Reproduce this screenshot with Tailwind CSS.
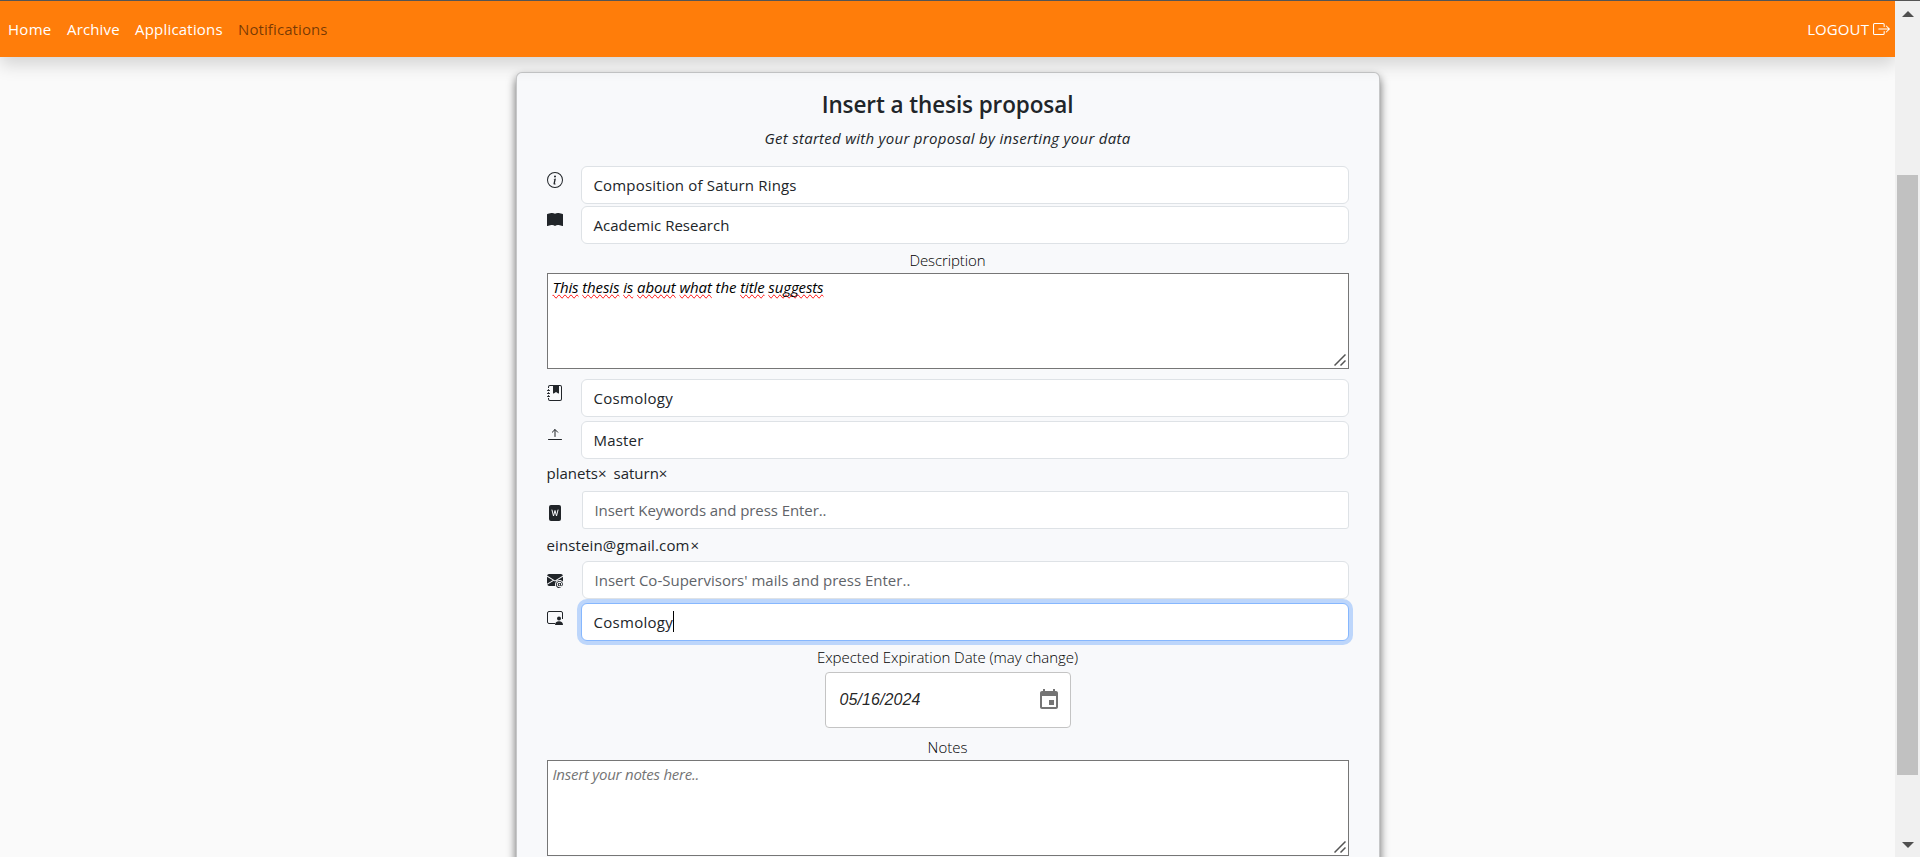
<!DOCTYPE html>
<html lang="en">
<head>
<meta charset="utf-8">
<title>Insert a thesis proposal</title>
<script src="https://cdn.jsdelivr.net/npm/@tailwindcss/browser@4"></script>
</head>
<body class="flex h-[857px] overflow-hidden border-t border-[#555] bg-[#fafafa] font-['Open_Sans',sans-serif] text-[15px] leading-6 text-[#212529]">
<div class="flex h-[856px] w-[1895px] flex-col overflow-hidden">
  <nav class="relative z-10 flex h-14 shrink-0 items-center justify-between bg-[#ff7d0a] pr-[5px] pb-px pl-2 text-white shadow-[0_8px_16px_rgba(0,0,0,0.15)]">
    <div class="flex gap-4">
      <span class="w-[43px] font-medium tracking-[0.3px] whitespace-nowrap">Home</span>
      <span class="w-[52px] font-medium tracking-[0.15px] whitespace-nowrap">Archive</span>
      <span class="w-[87px] font-medium tracking-[0.2px] whitespace-nowrap">Applications</span>
      <span class="tracking-[0.1px] whitespace-nowrap text-black/55">Notifications</span>
    </div>
    <div class="flex items-center gap-1">
      <span class="tracking-[0.1px]">LOGOUT</span>
      <svg class="h-4 w-[17px]" viewBox="0 0 16 16" preserveAspectRatio="none" fill="currentColor"><path d="M10 12.5a.5.5 0 0 1-.5.5h-8a.5.5 0 0 1-.5-.5v-9a.5.5 0 0 1 .5-.5h8a.5.5 0 0 1 .5.5v2a.5.5 0 0 0 1 0v-2A1.5 1.5 0 0 0 9.5 2h-8A1.5 1.5 0 0 0 0 3.5v9A1.5 1.5 0 0 0 1.5 14h8a1.5 1.5 0 0 0 1.5-1.5v-2a.5.5 0 0 0-1 0z"/><path d="M15.854 8.354a.5.5 0 0 0 0-.708l-3-3a.5.5 0 0 0-.708.708L14.293 7.5H5.5a.5.5 0 0 0 0 1h8.793l-2.147 2.146a.5.5 0 0 0 .708.708z"/></svg>
    </div>
  </nav>

  <main class="mx-auto mt-[15px] flex h-[900px] w-[864px] shrink-0 flex-col rounded-md border border-black/20 bg-[#f8f9fb] px-[30px] pt-[17px] shadow-[0_5px_10px_rgba(0,0,0,0.6)]">
    <h1 class="text-center text-[22.5px] leading-[29px] font-semibold tracking-[-0.1px]">Insert a thesis proposal</h1>
    <p class="mt-[7px] text-center tracking-[0.28px] italic">Get started with your proposal by inserting your data</p>

    <div class="mt-4 flex justify-between">
      <svg class="mt-1.5 size-4" viewBox="0 0 16 16" fill="currentColor"><path d="M8 15A7 7 0 1 1 8 1a7 7 0 0 1 0 14m0 1A8 8 0 1 0 8 0a8 8 0 0 0 0 16"/><path d="m8.93 6.588-2.29.287-.082.38.45.083c.294.07.352.176.288.469l-.738 3.468c-.194.897.105 1.319.808 1.319.545 0 1.178-.252 1.465-.598l.088-.416c-.2.176-.492.246-.686.246-.275 0-.375-.193-.304-.533zM9 4.5a1 1 0 1 1-2 0 1 1 0 0 1 2 0"/></svg>
      <div class="h-[38px] w-[768px] rounded-md border border-[#dee2e6] bg-white px-3 py-1.5 tracking-[0.17px]">Composition of Saturn Rings</div>
    </div>
    <div class="mt-0.5 flex justify-between">
      <svg class="mt-1.5 size-4" viewBox="0 0 16 16" fill="currentColor"><path d="M8 1.783C7.015.936 5.587.81 4.287.94c-1.514.153-3.042.672-3.994 1.105A.5.5 0 0 0 0 2.5v11a.5.5 0 0 0 .707.455c.882-.4 2.303-.881 3.68-1.02 1.409-.142 2.59.087 3.223.877a.5.5 0 0 0 .78 0c.633-.79 1.814-1.019 3.222-.877 1.378.139 2.8.62 3.681 1.02A.5.5 0 0 0 16 13.5v-11a.5.5 0 0 0-.293-.455c-.952-.433-2.48-.952-3.994-1.105C10.413.809 8.985.936 8 1.783"/></svg>
      <div class="h-[38px] w-[768px] rounded-md border border-[#dee2e6] bg-white px-3 py-1.5 tracking-[0.03px]">Academic Research</div>
    </div>

    <p class="mt-1 text-center font-light tracking-[-0.1px] text-black">Description</p>
    <div class="relative mt-px h-24 border border-[#767676] bg-white px-[5px] pt-px tracking-[-0.11px] text-black italic">
      <span class="[text-decoration-line:spelling-error]">This</span> <span class="[text-decoration-line:spelling-error]">thesis</span> <span class="[text-decoration-line:spelling-error]">is</span> <span class="[text-decoration-line:spelling-error]">about</span> <span class="[text-decoration-line:spelling-error]">what</span> the <span class="[text-decoration-line:spelling-error]">title</span> <span class="[text-decoration-line:spelling-error]">suggests</span>
      <svg class="absolute right-0.5 bottom-0.5 size-3" viewBox="0 0 12 12" fill="none" stroke="#555" stroke-width="1.5"><path d="M.5 11.5l11-11M6.5 11.5l5-5"/></svg>
    </div>

    <div class="mt-2.5 flex justify-between">
      <svg class="mt-1.5 size-4" viewBox="0 0 16 16" fill="currentColor"><path d="M6 1h6v7a.5.5 0 0 1-.757.429L9 7.083 6.757 8.43A.5.5 0 0 1 6 8z"/><path d="M3 0h10a2 2 0 0 1 2 2v12a2 2 0 0 1-2 2H3a2 2 0 0 1-2-2v-1h1v1a1 1 0 0 0 1 1h10a1 1 0 0 0 1-1V2a1 1 0 0 0-1-1H3a1 1 0 0 0-1 1v1H1V2a2 2 0 0 1 2-2"/><path d="M1 5v-.5a.5.5 0 0 1 1 0V5h.5a.5.5 0 0 1 0 1h-2a.5.5 0 0 1 0-1zm0 3v-.5a.5.5 0 0 1 1 0V8h.5a.5.5 0 0 1 0 1h-2a.5.5 0 0 1 0-1zm0 3v-.5a.5.5 0 0 1 1 0v.5h.5a.5.5 0 0 1 0 1h-2a.5.5 0 0 1 0-1z"/></svg>
      <div class="h-[38px] w-[768px] rounded-md border border-[#dee2e6] bg-white px-3 py-1.5 tracking-[0.28px]">Cosmology</div>
    </div>
    <div class="mt-1 flex justify-between">
      <svg class="mt-1.5 size-4" viewBox="0 0 16 16" fill="none" stroke="currentColor" stroke-linecap="round" stroke-linejoin="round"><path d="M1.5 12.5h13M8 9.5V2.7M5.3 5.2 8 2.5l2.7 2.7"/></svg>
      <div class="h-[38px] w-[768px] rounded-md border border-[#dee2e6] bg-white px-3 py-1.5 tracking-[0.18px]">Master</div>
    </div>

    <div class="mt-0.5 flex gap-[7px]"><span>planets×</span><span>saturn×</span></div>
    <div class="mt-1.5 flex justify-between">
      <svg class="mt-3.5 size-4" viewBox="0 0 16 16"><rect x="2" width="12" height="16" rx="2" fill="currentColor"/><path d="M5 5l1.5 6L8 5.5l1.5 5.500L11 5" fill="none" stroke="#f8f9fb" stroke-linecap="round" stroke-linejoin="round"/></svg>
      <div class="h-[38px] w-[767px] rounded-[3px] border border-[#dee2e6] bg-white px-3 py-1.5 tracking-[-0.07px] text-[#5f6469]">Insert Keywords and press Enter..</div>
    </div>

    <div class="mt-1 flex gap-px"><span class="tracking-[0.13px]">einstein@gmail.com</span><span>×</span></div>
    <div class="mt-1 flex justify-between">
      <svg class="mt-[11px] size-4" viewBox="0 0 16 16" fill="currentColor"><path d="M2 2A2 2 0 0 0 .05 3.555L8 8.414l7.95-4.859A2 2 0 0 0 14 2zm-2 9.8V4.698l5.803 3.546zm6.761-2.97-6.57 4.026A2 2 0 0 0 2 14h6.256A4.5 4.5 0 0 1 8 12.5a4.49 4.49 0 0 1 1.606-3.446l-.367-.225L8 9.586zM16 9.671V4.697l-5.803 3.546.338.208A4.5 4.5 0 0 1 12.5 8c1.414 0 2.675.652 3.5 1.671"/><path d="M15.834 12.244c0 1.168-.577 2.025-1.587 2.025-.503 0-1.002-.228-1.12-.648h-.043c-.118.416-.543.643-1.015.643-.77 0-1.259-.542-1.259-1.434v-.529c0-.844.481-1.4 1.26-1.4.585 0 .87.333.953.63h.03v-.568h.905v2.19c0 .272.18.42.411.42.315 0 .639-.415.639-1.39v-.118c0-1.277-.95-2.326-2.484-2.326h-.04c-1.582 0-2.64 1.067-2.64 2.724v.157c0 1.867 1.237 2.654 2.57 2.654h.045c.507 0 .935-.07 1.18-.18v.731c-.219.1-.643.175-1.237.175h-.044C10.438 16 9 14.82 9 12.646v-.214C9 10.36 10.421 9 12.485 9h.035c2.12 0 3.314 1.43 3.314 3.034zm-4.04.21v.227c0 .586.227.8.581.8.31 0 .564-.17.564-.743v-.367c0-.516-.275-.708-.572-.708-.346 0-.573.245-.573.791"/></svg>
      <div class="h-[38px] w-[767px] rounded-md border border-[#dee2e6] bg-white px-3 py-1.5 tracking-[0.01px] text-[#5f6469]">Insert Co-Supervisors' mails and press Enter..</div>
    </div>
    <div class="mt-1 flex justify-between">
      <svg class="mt-[7px] size-4" viewBox="0 0 16 16"><path d="M8 13.5H2A1.5 1.5 0 0 1 .5 12V3A1.5 1.5 0 0 1 2 1.500h12A1.5 1.5 0 0 1 15.5 3v6" fill="none" stroke="currentColor"/><circle cx="12" cy="8.5" r="2" fill="currentColor"/><path d="M8 15c0-2.500 1.500-3.800 4-3.800s4 1.300 4 3.800z" fill="currentColor"/></svg>
      <div class="flex h-[38px] w-[768px] rounded-md border border-[#86b7fe] bg-white px-3 py-1.5 shadow-[0_0_0_4px_rgba(13,110,253,0.25)]"><span class="tracking-[0.28px]">Cosmology</span><span class="mt-px h-[21px] w-px bg-black"></span></div>
    </div>

    <p class="mt-1 text-center font-light tracking-[-0.04px] text-black">Expected Expiration Date (may change)</p>
    <div class="mx-auto mt-[3px] flex h-14 w-[246px] items-center justify-between rounded border border-[#c4c4c4] bg-white pr-[9px] pl-3.5">
      <span class="font-['Liberation_Sans',sans-serif] text-base tracking-[0.1px] text-black/87 italic">05/16/2024</span>
      <svg class="size-6" viewBox="0 0 24 24" fill="#757575"><path d="M17 12h-5v5h5v-5zM16 1v2H8V1H6v2H5c-1.11 0-1.99.9-1.99 2L3 19c0 1.1.89 2 2 2h14c1.1 0 2-.9 2-2V5c0-1.1-.9-2-2-2h-1V1h-2zm3 18H5V8h14v11z"/></svg>
    </div>

    <p class="mt-[7px] text-center font-light text-black">Notes</p>
    <div class="relative mt-px h-24 shrink-0 border border-[#767676] bg-white px-[5px] pt-px tracking-[-0.23px] text-[#757575] italic">
      Insert your notes here..
      <svg class="absolute right-0.5 bottom-0.5 size-3" viewBox="0 0 12 12" fill="none" stroke="#555" stroke-width="1.5"><path d="M.5 11.5l11-11M6.5 11.5l5-5"/></svg>
    </div>
  </main>
</div>

<div class="flex w-[25px] flex-col items-center bg-[#f0f0f0] pt-2.5 pb-[9px]">
  <svg class="h-1.5 w-3" viewBox="0 0 12 6" fill="#505050"><path d="M6 0l6 6H0z"/></svg>
  <div class="mt-[158px] h-[600px] w-[21px] bg-[#c1c1c1]"></div>
  <svg class="mt-auto h-1.5 w-3" viewBox="0 0 12 6" fill="#505050"><path d="M0 0h12L6 6z"/></svg>
</div>
</body>
</html>
